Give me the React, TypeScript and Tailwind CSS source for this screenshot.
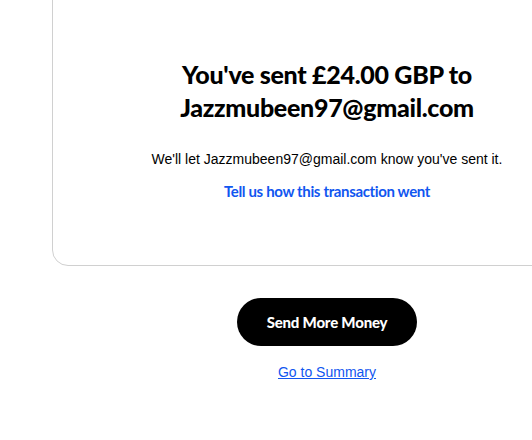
export default function App() {
  return (
    <div className="h-[440px] w-[532px] overflow-hidden bg-white">
      <div className="ml-[52px] flex w-[550px] flex-col items-center">
        {/* Confirmation card */}
        <div className="-mt-5 flex w-full flex-col items-center rounded-2xl border border-[#d0d0d0] pt-[77px] pb-[64px]">
          <h1 className="text-center font-['Lato',sans-serif] text-[25px] leading-[33px] font-black tracking-[-0.3px] text-black">
            You've sent £24.00 GBP to
            <br />
            Jazzmubeen97@gmail.com
          </h1>
          <p className="mt-[25px] font-['Liberation_Sans',Arial,sans-serif] text-[14px] leading-5 text-black">
            We'll let Jazzmubeen97@gmail.com know you've sent it.
          </p>
          <a href="#" className="mt-[12px] font-['Lato',sans-serif] text-[15px] leading-5 font-bold tracking-[-0.35px] text-[#1156f0]">
            Tell us how this transaction went
          </a>
        </div>

        <button type="button" className="mt-[32px] h-12 w-[180px] rounded-full bg-black font-['Lato',sans-serif] text-[15px] font-black tracking-[-0.2px] text-white">
          Send More Money
        </button>
        <a href="#" className="mt-[16px] font-['Liberation_Sans',Arial,sans-serif] text-[14px] leading-5 text-[#1156f0] underline">
          Go to Summary
        </a>
      </div>
    </div>
  )
}
